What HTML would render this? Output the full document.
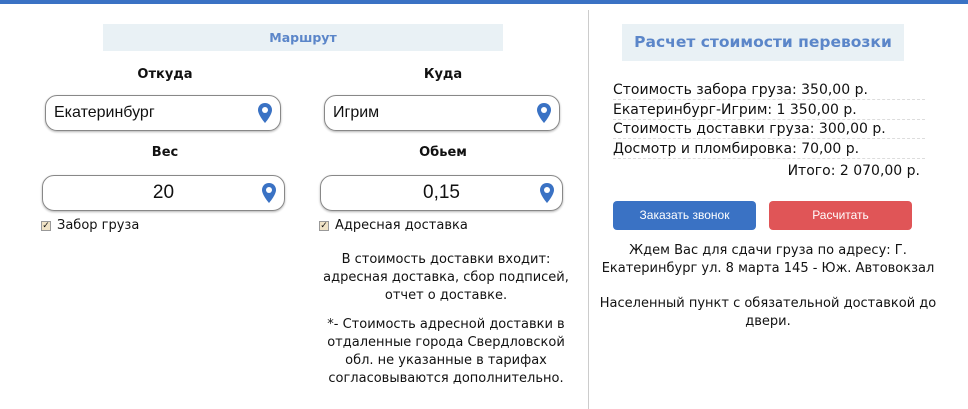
<!DOCTYPE html>
<html><head><meta charset="utf-8"><style>
*{margin:0;padding:0;box-sizing:border-box}
body{width:968px;height:409px;background:#fff;font-family:"DejaVu Sans","Liberation Sans",sans-serif;color:#111;position:relative;overflow:hidden}
.a{position:absolute}
.top{left:0;top:0;width:968px;height:4px;background:#3a72c4}
.div{left:588px;top:10px;width:1px;height:399px;background:#ccc}
.hbox{background:#e9f1f5;color:#5b86c9;font-weight:bold;text-align:center;white-space:nowrap}
.lbl{font-size:13px;font-weight:bold;text-align:center;width:240px}
.inp{border:1px solid #888;border-radius:12px;box-shadow:0 1px 2px rgba(0,0,0,.3);font-family:"Liberation Sans",sans-serif}
.inp svg{position:absolute;right:8px;top:50%;transform:translateY(-50%)}
.cb{font-size:13px;display:flex;align-items:center}
.cb span{display:inline-block;width:10px;height:10px;background:#f0e3c6;border:1px solid #999;margin-right:6px;font-size:9px;line-height:8px;text-align:center}
.t{font-size:13px;text-align:center;line-height:18px}
.r{font-size:14px;left:613px;width:312px;border-bottom:1px dashed #ddd;height:19.5px;line-height:20px;white-space:nowrap}
.btn{color:#fff;font-size:12px;text-align:center;line-height:29px;border-radius:4px;font-family:"Liberation Sans",sans-serif}
</style></head><body>
<div class="a top"></div>
<div class="a div"></div>
<div class="a hbox" style="left:103px;top:24px;width:400px;height:27px;line-height:27px;font-size:12.5px">Маршрут</div>
<div class="a lbl" style="left:45px;top:67px">Откуда</div>
<div class="a lbl" style="left:323px;top:67px">Куда</div>
<div class="a inp" style="left:45px;top:95px;width:236px;height:36px;font-size:16px;line-height:34px;padding-left:8px">Екатеринбург<svg width="14" height="20" viewBox="0 0 14 20"><path d="M7 0C3 0 0 3 0 7c0 5 7 13 7 13s7-8 7-13c0-4-3-7-7-7z" fill="#3a72c4"/><circle cx="7" cy="7" r="3" fill="#fff"/></svg></div>
<div class="a inp" style="left:324px;top:95px;width:236px;height:36px;font-size:16px;line-height:34px;padding-left:8px">Игрим<svg width="14" height="20" viewBox="0 0 14 20"><path d="M7 0C3 0 0 3 0 7c0 5 7 13 7 13s7-8 7-13c0-4-3-7-7-7z" fill="#3a72c4"/><circle cx="7" cy="7" r="3" fill="#fff"/></svg></div>
<div class="a lbl" style="left:45px;top:145px">Вес</div>
<div class="a lbl" style="left:323px;top:145px">Обьем</div>
<div class="a inp" style="left:42px;top:175px;width:243px;height:36px;font-size:19px;line-height:34px;text-align:center">20<svg width="14" height="20" viewBox="0 0 14 20"><path d="M7 0C3 0 0 3 0 7c0 5 7 13 7 13s7-8 7-13c0-4-3-7-7-7z" fill="#3a72c4"/><circle cx="7" cy="7" r="3" fill="#fff"/></svg></div>
<div class="a inp" style="left:320px;top:175px;width:243px;height:36px;font-size:19px;line-height:34px;text-align:center">0,15<svg width="14" height="20" viewBox="0 0 14 20"><path d="M7 0C3 0 0 3 0 7c0 5 7 13 7 13s7-8 7-13c0-4-3-7-7-7z" fill="#3a72c4"/><circle cx="7" cy="7" r="3" fill="#fff"/></svg></div>
<div class="a cb" style="left:41px;top:218px"><span>✓</span>Забор груза</div>
<div class="a cb" style="left:319px;top:218px"><span>✓</span>Адресная доставка</div>
<div class="a t" style="left:316px;top:251px;width:260px">В стоимость доставки входит: адресная доставка, сбор подписей, отчет о доставке.</div>
<div class="a t" style="left:316px;top:316px;width:260px">*- Стоимость адресной доставки в отдаленные города Свердловской обл. не указанные в тарифах согласовываются дополнительно.</div>
<div class="a hbox" style="left:622px;top:24px;width:282px;height:37px;line-height:37px;font-size:15.5px">Расчет стоимости перевозки</div>
<div class="a r" style="top:80px">Стоимость забора груза: 350,00 р.</div>
<div class="a r" style="top:100px">Екатеринбург-Игрим: 1 350,00 р.</div>
<div class="a r" style="top:119px">Стоимость доставки груза: 300,00 р.</div>
<div class="a r" style="top:139px">Досмотр и пломбировка: 70,00 р.</div>
<div class="a" style="left:613px;top:163px;width:307px;text-align:right;font-size:14px">Итого: 2 070,00 р.</div>
<div class="a btn" style="left:613px;top:201px;width:143px;height:29px;background:#3a72c4">Заказать звонок</div>
<div class="a btn" style="left:769px;top:201px;width:143px;height:29px;background:#e05557">Расчитать</div>
<div class="a t" style="left:594px;top:242px;width:348px">Ждем Вас для сдачи груза по адресу: Г. Екатеринбург ул. 8 марта 145 - Юж. Автовокзал</div>
<div class="a t" style="left:594px;top:295px;width:348px">Населенный пункт с обязательной доставкой до двери.</div>
</body></html>
